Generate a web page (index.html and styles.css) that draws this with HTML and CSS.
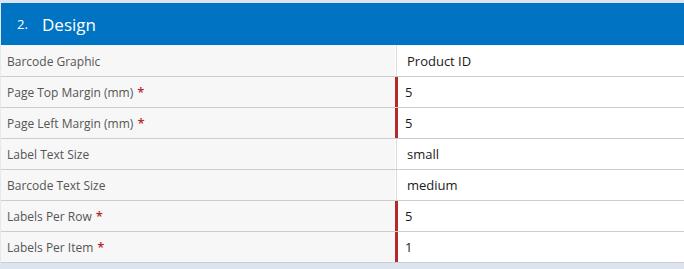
FILE: index.html
```html
<!DOCTYPE html>
<html lang="en">
<head>
    <meta charset="UTF-8">
    <title>Design</title>
    <link rel="stylesheet" href="styles.css">
</head>
<body>
    <div class="panel">
        <div class="panel-header">
            <span class="step">2.</span>
            <span class="title">Design</span>
        </div>

        <!-- Design settings -->
        <div class="rows">
            <div class="row">
                <div class="label">Barcode Graphic</div>
                <div class="value">Product ID</div>
            </div>
            <div class="row required">
                <div class="label">Page Top Margin (mm) <span class="star">*</span></div>
                <div class="value">5</div>
            </div>
            <div class="row required">
                <div class="label">Page Left Margin (mm) <span class="star">*</span></div>
                <div class="value">5</div>
            </div>
            <div class="row">
                <div class="label">Label Text Size</div>
                <div class="value">small</div>
            </div>
            <div class="row">
                <div class="label">Barcode Text Size</div>
                <div class="value">medium</div>
            </div>
            <div class="row required">
                <div class="label">Labels Per Row <span class="star">*</span></div>
                <div class="value">5</div>
            </div>
            <div class="row required">
                <div class="label">Labels Per Item <span class="star">*</span></div>
                <div class="value">1</div>
            </div>
        </div>
    </div>
</body>
</html>
```

FILE: styles.css
```css
* {
    box-sizing: border-box;
    margin: 0;
    padding: 0;
}

body {
    font-family: 'Open Sans', sans-serif;
    background: #dce4f0;
    padding-top: 3px;
    height: 269px;
    overflow: hidden;
}

.panel {
    background: #ffffff;
    border-left: 1px solid #e4e9f1;
}

.panel-header {
    background: #0074c2;
    color: #ffffff;
    height: 43px;
    display: flex;
    align-items: center;
    padding-left: 16px;
    border-bottom: 1px solid #f0f4f8;
}

.step {
    font-size: 13px;
    width: 25px;
}

.title {
    font-size: 17px;
}

.row {
    display: grid;
    grid-template-columns: 394px 1fr;
    height: 31px;
    border-bottom: 1px solid #cdcdcd;
}

.label {
    background: #f7f7f7;
    color: #555555;
    font-size: 12px;
    padding-left: 6px;
    display: flex;
    align-items: center;
    gap: 4px;
}

.star {
    color: #b7282e;
    font-size: 13px;
    font-weight: 600;
}

.value {
    color: #1a1a1a;
    font-size: 13px;
    padding-left: 10px;
    display: flex;
    align-items: center;
    border-left: 1px solid #dcdcdc;
    margin-left: 1px;
}

.required .value {
    border-left: 3px solid #b22a2a;
    margin-left: 0;
    padding-left: 7px;
}
```
